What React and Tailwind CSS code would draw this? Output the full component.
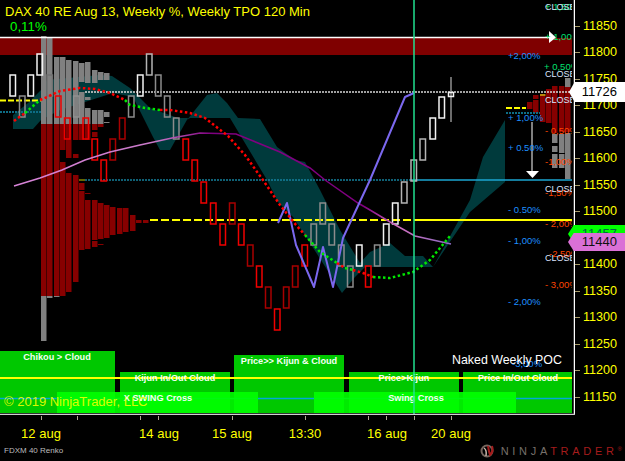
const font = '"Liberation Sans", Arial, sans-serif';

// renko bricks: x, top, colour key
const W = '#f2f2f2', G = '#8c8c8c', L = '#b4b4b4', R = '#f00000', D = '#a80000';
const bricks = [
  [10, 75, W], [19.5, 96, G], [28, 75, W], [37, 54, W], [47, 75, '#707070'], [55.5, 96, R], [64.5, 118, R],
  [73.5, 96, '#909090'], [83, 118, R], [92, 139, R], [101, 160, R], [110, 139, D], [119.5, 118, D],
  [128.5, 96, G], [137.5, 75, W], [146.5, 54, L], [155.5, 75, G], [164.5, 96, G], [173.5, 118, G],
  [183, 139, R], [192, 160, R], [201, 182, R], [210.5, 203, R], [220, 224, R], [229.5, 203, D], [238.5, 224, R],
  [247.5, 245, D], [256.5, 266, R], [265.5, 287, D], [274.5, 309, R], [283.5, 287, D], [292.5, 266, D],
  [302, 245, R], [311, 224, G], [320, 203, G], [329, 224, G], [338.5, 245, G], [347.5, 266, G], [356.5, 245, W],
  [365.5, 266, R], [374.5, 245, G], [383.5, 224, W], [392.5, 203, W], [401.5, 182, L], [411, 160, L],
  [420, 139, L], [430, 118, W], [439, 97, W],
];

// volume profile, left side: x, [[top, bottom, colour]...]
const A = '#808080', B = '#870000';
const profile = [
  [41, [[36, 124, A], [124, 296, B], [296, 341, A]]],
  [47, [[38, 124, A], [124, 296, B], [296, 298, A]]],
  [54, [[57, 124, A], [124, 296, B], [296, 297, A]]],
  [60, [[57, 124, A], [124, 150, B], [162, 296, B]]],
  [66, [[60, 124, A], [124, 158, B], [173, 292, B]]],
  [73, [[61, 124, A], [124, 140, B], [154, 158, B], [175, 282, B]]],
  [79, [[63, 82, A], [92, 124, A], [124, 140, B], [183, 190, B], [191, 250, B]]],
  [85, [[62, 83, A], [97, 100, A], [108, 124, A], [124, 140, B], [193, 194, B], [200, 249, B]]],
  [92, [[70, 83, A], [110, 124, A], [124, 130, B], [132, 137, B], [200, 240, B], [241, 247, B]]],
  [98, [[72, 80, A], [110, 124, A], [124, 127, B], [203, 239, B], [244, 245, B]]],
  [104, [[73, 80, A], [112, 117, A], [122, 123, A], [205, 238, B]]],
  [110, [[207, 235, B]]],
  [117, [[208, 234, B]]],
  [123, [[208, 232, B]]],
  [130, [[215, 231, B]]],
  [136, [[220, 223, B]]],
  [143, [[220, 223, B]]],
];

// volume profile, right side
const profileRight = [
  [527, [[102, 109, B]]],
  [533, [[95, 99, B], [100, 113, B]]],
  [540, [[94, 96, '#b8860b'], [96, 122, B]]],
  [546, [[89, 123, B]]],
  [552, [[86, 133, B], [134, 143, A], [146, 152, A], [154, 168, A]]],
  [559, [[86, 132, B], [134, 153, A], [154, 168, A]]],
  [565, [[78, 87, A], [87, 132, B], [133, 179, A]]],
];

const blocks = [
  { x: 0, y: 351, w: 115, label: 'Chikou > Cloud', c: 57 },
  { x: 120, y: 372, w: 110, label: 'Kijun In/Out Cloud', c: 175 },
  { x: 234, y: 355, w: 110, label: 'Price>> Kijun & Cloud', c: 289 },
  { x: 349, y: 372, w: 110, label: 'Price>Kijun', c: 404 },
  { x: 463, y: 372, w: 109, label: 'Price In/Out Cloud', c: 518 },
];

const blue = '#1e90ff', orange = '#ff4500', green = '#00e070';
const percents = [
  ['+2,00%', 508, 59, blue], ['+ 1,00%', 508, 121, blue], ['+ 0.50%', 508, 151, blue], ['- 0.50%', 508, 213, blue],
  ['- 1,00%', 508, 244, blue], ['- 2,00%', 508, 305, blue], ['-3,00%', 512, 367, blue],
  ['+ 1,50%', 545, 10, green], ['+ 1,00%', 545, 40, green], ['+ 0,50%', 544, 70, green],
  ['- 0,50%', 545, 134, orange], ['-1,00%', 545, 165, orange], ['-1,50%', 545, 196, orange],
  ['- 2,00%', 545, 227, orange], ['-2,50%', 549, 257, orange], ['- 3,00%', 545, 288, orange],
];
const closes = [[545, 10], [545, 77], [545, 103], [545, 192], [545, 261]];

const prices = [11850, 11800, 11750, 11700, 11650, 11600, 11550, 11500, 11450, 11400, 11350, 11300, 11250, 11200, 11150];
const ticks = [41, 77, 140, 158, 232, 305, 368, 386, 414, 451];
const dates = [['12 aug', 41], ['14 aug', 159], ['15 aug', 232], ['13:30', 305], ['16 aug', 387], ['20 aug', 451]];

function Chart() {
  return (
    <svg width="575" height="415" className="block shrink-0" fontFamily={font}>
      <defs>
        <clipPath id="plot"><rect x="0" y="0" width="572" height="415" /></clipPath>
        <linearGradient id="sma" gradientUnits="userSpaceOnUse" x1="14" y1="0" x2="451" y2="0">
          <stop offset="0" stopColor="#d884d8" />
          <stop offset="0.33" stopColor="#c878c8" />
          <stop offset="0.45" stopColor="#800080" />
          <stop offset="0.8" stopColor="#800080" />
          <stop offset="0.88" stopColor="#d070c0" />
          <stop offset="1" stopColor="#8a6ac0" />
        </linearGradient>
      </defs>

      <rect x="0" y="38" width="572" height="17" fill="#7f0000" />

      <g fill="#003a3c">
        <polygon points="13,115 28,103 41,90 47,80 100,75 112,76 130,88 150,108 178,118 188,118 170,150 160,150 153,137 133,97 113,93 60,110 41,120 33,129 13,129" />
        <polygon points="187,120 207,95 217,93 227,103 238,118 260,119 277,147 295,160 305,162 320,190 340,230 360,263 370,252 390,243 405,256 423,256 433,267 365,267 355,277 342,293 310,243 293,217 278,202 267,180 230,118 190,118" />
        <polygon points="433,267 470,200 483,157 505,120 505,182 470,212" />
      </g>

      {profile.concat(profileRight).map(([x, parts]) =>
        parts.map(([top, bottom, color]) => (
          <rect key={`${x}-${top}`} x={x} y={top} width="5.5" height={bottom - top} fill={color} />
        ))
      )}

      <line x1="0" y1="37.5" x2="550" y2="37.5" stroke="#fff" strokeWidth="1.5" />
      <polygon points="549,31 556,37.5 549,43" fill="#fff" />

      <line x1="0" y1="100.5" x2="41" y2="100.5" stroke="#ffff00" strokeWidth="2" strokeDasharray="6 2" />
      <line x1="506" y1="108" x2="526" y2="108" stroke="#ffff00" strokeWidth="2" strokeDasharray="6 2" />
      <line x1="0" y1="112" x2="41" y2="112" stroke="#0e6d85" strokeWidth="2" strokeDasharray="2 1" />
      <line x1="506" y1="113" x2="540" y2="113" stroke="#0e6d85" strokeWidth="2" strokeDasharray="2 1" />
      <line x1="85" y1="92" x2="570" y2="92" stroke="#d8d8d8" strokeWidth="1.5" strokeDasharray="2 1" />

      <line x1="79" y1="180" x2="85" y2="180" stroke="#c8c800" strokeWidth="1" />
      <line x1="85" y1="180" x2="411" y2="180" stroke="#15809c" strokeWidth="1.5" strokeDasharray="2 1" />
      <line x1="411" y1="180" x2="572" y2="180" stroke="#1ba6d2" strokeWidth="1.5" />
      <line x1="150" y1="220" x2="414" y2="220" stroke="#ffff00" strokeWidth="2" strokeDasharray="8 3" />
      <line x1="414" y1="220" x2="572" y2="220" stroke="#ffff00" strokeWidth="2" />

      {bricks.map(([x, top, color]) => (
        <rect key={x} x={x} y={top} width="5.5" height="21" fill="none" stroke={color} strokeWidth="1.5" />
      ))}
      <line x1="451" y1="77" x2="451" y2="122" stroke="#909090" strokeWidth="1.5" />
      <rect x="448.5" y="92.5" width="5" height="4" fill="none" stroke="#f2f2f2" strokeWidth="1.5" />

      <polyline
        fill="none" stroke="url(#sma)" strokeWidth="1.5"
        points="14,186 40,178 62,170 85,160 110,152 140,145 172,138 200,133 236,134 280,152 310,168 325,180 358,203 370,210 390,222 415,236 451,244"
      />
      <polyline
        fill="none" stroke="#7b68ee" strokeWidth="2" strokeLinejoin="round"
        points="278,223 287,203 296,245 314,287 323,247 333,287 343,238 370,180 405,97 414,93"
      />

      {/* kijun dots */}
      <g fill="none" strokeWidth="2.5" strokeDasharray="2.5 2.5">
        <polyline stroke="#ff0000" points="14,121 25,113" />
        <polyline stroke="#00e800" points="25,113 40,100" />
        <polyline stroke="#ff0000" points="40,100 47,97 60,91 80,88 95,89 110,93 125,100" />
        <polyline stroke="#00e800" points="125,100 130,105 145,108 160,110" />
        <polyline stroke="#ff0000" points="160,110 170,110 190,113 205,118 228,136 245,155 265,183 280,205 296,225 305,235" />
        <polyline stroke="#00e800" points="305,235 320,252 337,263" />
        <polyline stroke="#ff0000" points="337,263 345,268" />
        <polyline stroke="#00e800" points="345,268 353,270" />
        <polyline stroke="#ff0000" points="353,270 363,273 373,277" />
        <polyline stroke="#00e800" points="373,277 390,278 413,272 430,260 450,236" />
      </g>

      <line x1="532" y1="122" x2="532" y2="175" stroke="#fff" strokeWidth="1" />
      <polygon points="526,171 539,171 532.5,178" fill="#fff" />

      {/* signal boxes */}
      {blocks.map((b) => (
        <rect key={b.x} x={b.x} y={b.y} width={b.w} height={413 - b.y} fill="#00c800" />
      ))}
      <line x1="0" y1="398.5" x2="572" y2="398.5" stroke="#00a8d8" strokeWidth="1.5" />
      <rect x="57" y="392" width="201" height="21" fill="#00ff00" fillOpacity="0.92" />
      <rect x="314" y="392" width="202" height="21" fill="#00ff00" fillOpacity="0.92" />
      <line x1="0" y1="378" x2="572" y2="378" stroke="#ffff00" strokeWidth="2" />

      <g fill="#f4fff4" fontSize="9.2" fontWeight="700" textAnchor="middle">
        {blocks.map((b) => (
          <text key={b.x} x={b.c} y={b.y + 9}>{b.label}</text>
        ))}
        <text x="158" y="401">X SWING Cross</text>
        <text x="416" y="401">Swing Cross</text>
      </g>

      <line x1="414" y1="0" x2="414" y2="414" stroke="#20e090" strokeWidth="1.5" />

      <g clipPath="url(#plot)" fontSize="9.5">
        {percents.map(([label, x, y, color]) => (
          <text key={`${label}${y}`} x={x} y={y} fill={color}>{label}</text>
        ))}
        {closes.map(([x, y]) => (
          <text key={y} x={x} y={y} fontSize="9" fill="#dbe6ff">CLOSE</text>
        ))}
      </g>

      <text x="452" y="363.5" fontSize="12.4" fill="#fff">Naked Weekly POC</text>
      <text x="4" y="406" fontSize="13" fill="#f0ff00" fillOpacity="0.92">© 2019 NinjaTrader, LLC</text>

      <line x1="574.5" y1="0" x2="574.5" y2="414" stroke="#fff" strokeWidth="1.5" />
      <line x1="0" y1="414.5" x2="575" y2="414.5" stroke="#d0d0d0" strokeWidth="1.5" />
    </svg>
  );
}

function NinjaIcon() {
  return (
    <svg width="16" height="14" viewBox="0 0 16 14">
      <circle cx="7" cy="7" r="5.5" fill="none" stroke="#77665e" strokeWidth="2" />
      <path d="M4 4 Q7 6 6 12" fill="none" stroke="#c9b8ac" strokeWidth="1.5" />
      <path d="M8 2 Q9 8 10 11 Q14 7 12 2" fill="none" stroke="#a51c1c" strokeWidth="2" />
    </svg>
  );
}

export default function App() {
  return (
    <div className="relative w-[625px] h-[461px] overflow-hidden bg-black" style={{ fontFamily: font }}>
      <div className="flex h-[415px]">
        <Chart />
        <div className="flex flex-col pt-[12.75px] text-[12.6px] text-[#ffff00]">
          {prices.map((p) => (
            <div key={p} className="flex items-center h-[26.5px] shrink-0">
              <span className="w-[5px] h-px bg-[#a89c6a]" />
              <span className="ml-[3px]">{p}</span>
            </div>
          ))}
        </div>
      </div>

      <div className="relative h-[5px] -mt-px">
        {ticks.map((x) => (
          <span key={x} className="absolute top-[2px] w-px h-[4px] bg-[#b0a890]" style={{ left: x }} />
        ))}
      </div>
      <div className="relative h-[24px] text-[13px] text-[#ffff00]">
        {dates.map(([label, x]) => (
          <span key={label} className="absolute top-[5px] -translate-x-1/2 whitespace-nowrap" style={{ left: x }}>{label}</span>
        ))}
      </div>
      <div className="flex items-center justify-between pl-[4px] pr-[3px] pt-[1px]">
        <span className="text-[8px] text-[#bdbdbd]">FDXM 40 Renko</span>
        <div className="flex items-center gap-[5px]">
          <NinjaIcon />
          <span className="text-[11px] leading-none tracking-[3.7px] text-[#77706a] whitespace-nowrap">NINJA<span className="text-[#a51c1c]">TRADER</span><span className="text-[6px] tracking-normal text-[#a51c1c] align-top">®</span></span>
        </div>
      </div>

      {/* last price flags */}
      <div className="absolute left-[569px] top-[82px] w-[56px] h-[20px] flex items-center justify-end pr-[8px] bg-white text-[13px] text-black [clip-path:polygon(10%_0,100%_0,100%_100%,10%_100%,0_50%)]">11726</div>
      <div className="absolute left-[568px] top-[225px] w-[57px] h-[18px] flex items-center justify-end pr-[8px] bg-[#00ff00] text-[13px] text-[#064] [clip-path:polygon(10%_0,100%_0,100%_100%,10%_100%,0_50%)]">11457</div>
      <div className="absolute left-[568px] top-[233px] w-[57px] h-[18px] flex items-center justify-end pr-[8px] bg-[#da70d6] text-[13px] text-[#111] [clip-path:polygon(10%_0,100%_0,100%_100%,10%_100%,0_50%)]">11440</div>

      <div className="absolute left-[5px] top-[4px] text-[13px] leading-4 text-[#ffff00] whitespace-nowrap">DAX 40 RE Aug 13, Weekly %, Weekly TPO 120 Min</div>
      <div className="absolute left-[10px] top-[19px] text-[13.3px] leading-4 text-[#00ff00]">0,11%</div>
    </div>
  );
}
